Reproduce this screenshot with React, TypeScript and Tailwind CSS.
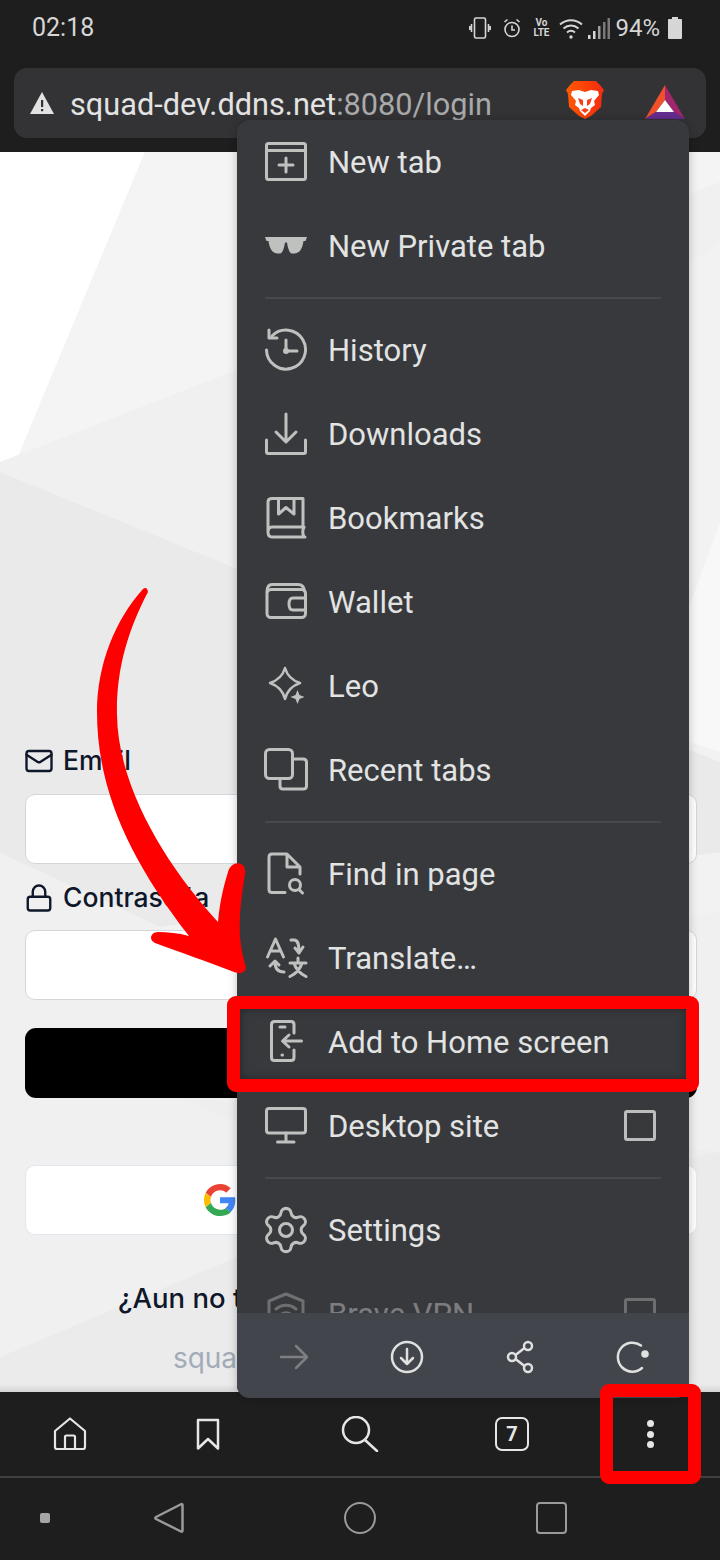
import { Lock, Mail, Settings } from "lucide-react";
import type { ReactNode } from "react";

const roboto = "font-['Roboto',sans-serif]";
const inter = "font-['Inter',sans-serif]";

// menu icons share a 44px box, coordinates read off the screenshot
function Icon({ children }: { children: ReactNode }) {
  return (
    <svg
      width="44"
      height="44"
      viewBox="0 0 44 44"
      fill="none"
      stroke="currentColor"
      strokeWidth="3"
      strokeLinecap="round"
      strokeLinejoin="round"
      className="shrink-0 text-[#bfc1bf]"
    >
      {children}
    </svg>
  );
}

function Checkbox() {
  return <div className="ml-auto mr-[33px] h-[31px] w-[32px] -translate-y-[1px] rounded-[3px] border-[3px] border-[#bcbebd]" />;
}

function MenuRow({ icon, label, check, faded }: { icon: ReactNode; label: string; check?: boolean; faded?: boolean }) {
  return (
    <div className={`flex h-[84px] shrink-0 items-center pl-[27px] ${faded ? "opacity-40" : ""}`}>
      {icon}
      <span className={`ml-[20px] pt-[2px] text-[31px] text-[#e2e3e3] ${roboto}`}>{label}</span>
      {check && <Checkbox />}
    </div>
  );
}

function MenuDivider() {
  return (
    <div className="flex h-[20px] shrink-0 items-center pb-[1px] pl-[28px] pr-[28px]">
      <div className="h-[2px] w-full bg-[#48494b]" />
    </div>
  );
}

function FormLabel({ icon, children }: { icon: ReactNode; children: ReactNode }) {
  return (
    <div className={`flex h-[34px] items-center text-[26.5px] font-medium text-[#0f172a] ${inter}`}>
      <span className="-ml-[1px] mr-[9px] flex w-[30px] justify-center">{icon}</span>
      {children}
    </div>
  );
}

function Background() {
  return (
    <svg className="absolute inset-0" width="720" height="1240" viewBox="0 0 720 1240">
      <rect width="720" height="1240" fill="#f2f2f2" />
      <polygon points="0,0 145,0 0,348" fill="#ffffff" />
      <polygon points="145,0 720,0 720,60 0,310 0,348" fill="#f4f4f4" />
      <polygon points="0,310 720,30 720,90 240,418 0,320" fill="#f0f0f0" />
      <polygon points="0,320 240,418 720,610 720,700 160,775 0,701" fill="#eaeaea" />
      <polygon points="0,701 160,775 240,810 720,760 720,1000 237,1105 0,1205" fill="#f0f0f0" />
      <polygon points="180,945 720,1000 720,1010 233,968" fill="#eeeeee" />
      <polygon points="0,1205 237,1105 720,1000 720,1240 0,1240" fill="#ebebeb" />
      <polygon points="689,455 720,370 720,600 689,590" fill="#f8f8f8" />
    </svg>
  );
}

function Page() {
  return (
    <div className="relative flex h-[1240px] flex-col overflow-hidden pl-[25px] pr-[23px] pt-[592px]">
      <Background />
      <div className="relative flex flex-col">
        <FormLabel icon={<Mail size={30} strokeWidth={1.9} />}>Email</FormLabel>
        <div className="mt-[16px] h-[70px] rounded-[10px] border border-[#d4d6dc] bg-white" />
        <div className="mt-[17px]">
          <FormLabel icon={<Lock size={30} strokeWidth={1.9} />}>Contraseña</FormLabel>
        </div>
        <div className="mt-[15px] h-[70px] rounded-[10px] border border-[#d4d6dc] bg-white" />
        <div className={`mt-[28px] flex h-[70px] items-center justify-center rounded-[11px] bg-black text-[26px] text-white ${inter}`}>
          Iniciar sesión
        </div>
        <div className={`mt-[67px] flex h-[70px] items-center justify-center gap-[14px] rounded-[10px] border border-[#e2e8f0] bg-white text-[26px] text-[#0f172a] ${inter}`}>
          <svg width="32" height="32" viewBox="0 0 48 48">
            <path fill="#EA4335" d="M24 9.5c3.54 0 6.71 1.22 9.21 3.6l6.85-6.85C35.9 2.38 30.47 0 24 0 14.62 0 6.51 5.38 2.56 13.22l7.98 6.19C12.43 13.72 17.74 9.5 24 9.5z" />
            <path fill="#4285F4" d="M46.98 24.55c0-1.57-.15-3.09-.38-4.55H24v9.02h12.94c-.58 2.96-2.26 5.48-4.78 7.18l7.73 6c4.51-4.18 7.09-10.36 7.09-17.65z" />
            <path fill="#FBBC05" d="M10.53 28.59c-.48-1.45-.76-2.99-.76-4.59s.27-3.14.76-4.59l-7.98-6.19C.92 16.46 0 20.12 0 24c0 3.88.92 7.54 2.56 10.78l7.97-6.19z" />
            <path fill="#34A853" d="M24 48c6.48 0 11.93-2.13 16.09-5.81l-7.73-6c-2.15 1.45-4.92 2.3-8.37 2.3-6.26 0-11.57-4.22-13.47-9.91l-7.98 6.19C6.51 42.62 14.62 48 24 48z" />
          </svg>
          Continuar con Google
        </div>
        <div className={`mt-[46px] h-[34px] whitespace-nowrap text-center text-[27.5px] font-medium leading-[34px] text-[#0f172a] ${inter}`}>
          ¿Aun no tienes cuenta? Regístrate ya
        </div>
        <div className={`mt-[26px] h-[34px] whitespace-nowrap text-center text-[28px] leading-[34px] text-[#a3abb8] ${inter}`}>
          squad-dev.ddns.net © 2024
        </div>
      </div>
      <div className="absolute inset-x-0 bottom-0 h-[8px] bg-gradient-to-b from-transparent to-black/10" />
    </div>
  );
}

function StatusBar() {
  return (
    <div className="flex h-[68px] items-center pl-[32px] pr-[38px] text-[#d6d6d6]">
      <span className={`mb-[12px] text-[25px] ${roboto}`}>02:18</span>
      <div className="mb-[12px] ml-auto flex items-center">
        <svg width="22" height="22" viewBox="0 0 22 22" fill="none" stroke="currentColor" strokeWidth="1.6">
          <rect x="5.5" y="1" width="11" height="20" rx="1.5" />
          <path d="M2.5 7v8M19.5 7v8M.8 9v4M21.2 9v4" />
        </svg>
        <svg className="ml-[12px]" width="18" height="20" viewBox="0 0 18 20" fill="none" stroke="currentColor" strokeWidth="1.6">
          <circle cx="9" cy="11.5" r="7" />
          <path d="M9 7.5v4.5h3M1.5 4L4.5 1.5M16.5 4L13.5 1.5" />
        </svg>
        <div className={`ml-[12px] flex w-[16px] flex-col items-center text-[10px] font-bold leading-[10px] ${roboto}`}>
          <span>Vo</span>
          <span>LTE</span>
        </div>
        <svg className="ml-[10px]" width="24" height="21" viewBox="0 0 24 21" fill="none" stroke="currentColor" strokeWidth="2">
          <path d="M1 6.5C7.5 .8 16.5 .8 23 6.5M4.5 10.5C9 6.5 15 6.5 19.5 10.5M8 14.5c2.4-2 5.6-2 8 0" />
          <circle cx="12" cy="19" r="1.7" fill="currentColor" stroke="none" />
        </svg>
        <svg className="ml-[5px]" width="22" height="21" viewBox="0 0 22 21" fill="currentColor">
          <rect x="0" y="17" width="2.5" height="4" />
          <rect x="5" y="13" width="2.5" height="8" />
          <rect x="10" y="8" width="2.5" height="13" opacity="0.7" />
          <rect x="15" y="4" width="2.5" height="17" opacity="0.5" />
          <rect x="19.5" y="0" width="2.5" height="21" opacity="0.5" />
        </svg>
        <span className={`ml-[5px] text-[24px] ${roboto}`}>94%</span>
        <svg className="ml-[8px]" width="14" height="22" viewBox="0 0 14 22" fill="currentColor">
          <path d="M4 0h6v2h3a1 1 0 0 1 1 1v18a1 1 0 0 1-1 1H1a1 1 0 0 1-1-1V3a1 1 0 0 1 1-1h3z" />
        </svg>
      </div>
    </div>
  );
}

function UrlBar() {
  return (
    <div className="px-[14px] pb-[14px]">
      <div className="flex h-[70px] items-center rounded-[13px] bg-[#333336] pl-[16px]">
        <svg width="24" height="22" viewBox="0 0 24 22">
          <path d="M12 0L24 22H0z" fill="#e2e2e2" />
          <rect x="11" y="8" width="2.2" height="7" fill="#333336" />
          <rect x="11" y="17" width="2.2" height="2.2" fill="#333336" />
        </svg>
        <span className={`ml-[16px] pt-[4px] text-[30.7px] text-[#e3e3e3] ${roboto}`}>
          squad-dev.ddns.net<span className="text-[#a9aaab]">:8080/login</span>
        </span>
        <svg className="-mt-[6px] ml-auto" width="38" height="38" viewBox="0 0 38 38">
          <defs>
            <linearGradient id="braveFill" x1="0" y1="0" x2="1" y2="0">
              <stop offset="0" stopColor="#ff5a00" />
              <stop offset="1" stopColor="#f52a10" />
            </linearGradient>
          </defs>
          <path d="M8 0H30L34 4L38 9L36 13L35 26L25 35L19 38L13 35L3 26L2 13L0 9L4 4Z" fill="url(#braveFill)" />
          <path d="M6 10L13 9L19 11L25 9L32 10L33 14L28 20L29 24L25 27L24 30L19 35L14 30L13 27L9 24L10 20L5 14Z" fill="#ffffff" />
          <path d="M12 17L17 19V25L14 23ZM26 17L21 19V25L24 23ZM15 29L19 27L23 29L19 32Z" fill="#f6421a" />
        </svg>
        <svg className="ml-[41px] mr-[21px] -mt-[2px]" width="40" height="34" viewBox="0 0 40 34">
          <path d="M20 0L20 15L11 27L0 34Z" fill="#f0502c" />
          <path d="M20 0L40 34L29 27L20 15Z" fill="#a0266e" />
          <path d="M0 34H40L29 27H11Z" fill="#662d91" />
          <path d="M20 15L29 27H11Z" fill="#ffffff" />
        </svg>
      </div>
    </div>
  );
}

function Menu() {
  return (
    <div className="absolute left-[237px] top-[120px] flex h-[1278px] w-[452px] flex-col overflow-hidden rounded-[13px] bg-[#38393d] shadow-[0_0_10px_rgba(0,0,0,0.25)]">
      <div className="flex h-[1193px] flex-col overflow-hidden">
        <MenuRow label="New tab" icon={<Icon><rect x="2.5" y="3.5" width="39" height="36" rx="2" /><path d="M2.5 10.5H41.5M22 18V32M15 25H29" /></Icon>} />
        <MenuRow label="New Private tab" icon={<Icon><path d="M1 13H43L41.5 17H39.5C38.5 24 36 29.5 30 29.5H28C25 29.5 23.5 22 23 18.5H21C20.5 22 19 29.5 16 29.5H14C8 29.5 5.5 24 4.5 17H2.5Z" fill="currentColor" stroke="none" /></Icon>} />
        <MenuDivider />
        <MenuRow label="History" icon={<Icon><path d="M8 8A19.5 19.5 0 1 1 2.5 22" /><path d="M5 2V10H13" /><path d="M22 12V23H33" /><circle cx="22" cy="23" r="1.5" fill="currentColor" /></Icon>} />
        <MenuRow label="Downloads" icon={<Icon><path d="M22 2V30M12 20L22 30L32 20" /><path d="M2.5 28V40C2.5 41 3 41.5 4 41.5H40C41 41.5 41.5 41 41.5 40V28" /></Icon>} />
        <MenuRow label="Bookmarks" icon={<Icon><path d="M39 31V2.5H8C5 2.5 4 4 4 6V36C4 39.5 5.5 41 8 41H41M39 31H8C5 31 4 33.5 4 36M40 31C38.5 34 38.5 38 40 41" /><path d="M14.5 3V18L22 11.5L30 18V3" /></Icon>} />
        <MenuRow label="Wallet" icon={<Icon><path d="M3 12C3 7 5 4.5 8 4.5H34C38 4.5 40 6.5 40.5 11" /><rect x="3" y="9.5" width="38.5" height="28" rx="4" /><path d="M41 18H29C26 18 25 20 25 24C25 28 26 30 29 30H41" /></Icon>} />
        <MenuRow label="Leo" icon={<Icon><path d="M21 4C23 11 27 16 36 19C27 22 23 27 21 35C19 27 15 22 6 19C15 16 19 11 21 4Z" strokeWidth="2.5" /><path d="M33.5 26L35.5 31L40.5 33L35.5 35L33.5 40L31.5 35L26.5 33L31.5 31Z" fill="currentColor" stroke="none" /></Icon>} />
        <MenuRow label="Recent tabs" icon={<Icon><rect x="1.5" y="1.5" width="27" height="29" rx="4" /><path d="M29 11H39C41.5 11 42.5 12 42.5 14V38C42.5 40 41.5 41 39 41H19C17 41 16 40 16 38V31" /></Icon>} />
        <MenuDivider />
        <MenuRow label="Find in page" icon={<Icon><path d="M21 40.5H8C6 40.5 5 39.5 5 37.5V5C5 3 6 2 8 2H23L36 15V22M23 2V15H36" /><circle cx="31" cy="33" r="5.5" /><path d="M35 37.5L38.5 41" /></Icon>} />
        <MenuRow label="Translate…" icon={<Icon><path d="M3.5 21L11.5 3L19.5 21M6.5 15H16.5" /><path d="M26 27H42M34 22V27M38 27C36 34 31 38 26 40.5M30 27C32 34 37 38 42 40.5" /><path d="M27 4H30C34 4 35 8 35 16M31 12L35 17L39 11" /><path d="M11 26C11 33 14 36 20 36M6 30L11 25L15 29" /></Icon>} />
        <MenuRow label="Add to Home screen" icon={<Icon><path d="M30 13V4.5C30 2.5 29 1.5 27 1.5H10.5C8.5 1.5 7.5 2.5 7.5 4.5V37.5C7.5 39.5 8.5 40.5 10.5 40.5H27C29 40.5 30 39.5 30 37.5V30" /><path d="M16 7H21M18 35H18.5" /><path d="M37.5 21H19M25 15L18.5 21L25 27" /></Icon>} />
        <MenuRow label="Desktop site" check icon={<Icon><rect x="2.5" y="4.5" width="39" height="24.5" rx="2.5" /><path d="M22 29V37M13.5 38H30" /></Icon>} />
        <MenuDivider />
        <MenuRow label="Settings" icon={<Settings size={52} strokeWidth={1.4} className="-mx-[4px] shrink-0 text-[#bfc1bf]" />} />
        <MenuRow label="Brave VPN" check faded icon={<Icon><path d="M22 2L39 9V26C39 34 30 39 22 42C14 39 5 34 5 26V9Z" /><path d="M12 17C18 12 26 12 32 17M16 23C20 20 24 20 28 23" /></Icon>} />
      </div>
      <div className="grid h-[85px] shrink-0 grid-cols-4 items-center justify-items-center bg-[#43454c] pt-[2px]">
        <svg width="30" height="26" viewBox="0 0 30 26" fill="none" stroke="#7d7f83" strokeWidth="2.5" strokeLinecap="round" strokeLinejoin="round">
          <path d="M2 13H28M17 2L28 13L17 24" />
        </svg>
        <svg width="34" height="34" viewBox="0 0 34 34" fill="none" stroke="#dfe0e0" strokeWidth="2.5" strokeLinecap="round" strokeLinejoin="round">
          <circle cx="17" cy="17" r="15" />
          <path d="M17 9V24M11 18L17 24L23 18" />
        </svg>
        <svg width="30" height="34" viewBox="0 0 30 34" fill="none" stroke="#dfe0e0" strokeWidth="2.5">
          <circle cx="23" cy="6" r="4" />
          <circle cx="7" cy="17" r="4" />
          <circle cx="23" cy="28" r="4" />
          <path d="M10.5 15L19.5 8M10.5 19L19.5 26" />
        </svg>
        <svg width="34" height="34" viewBox="0 0 34 34" fill="none" stroke="#dfe0e0" strokeWidth="2.5" strokeLinecap="round">
          <path d="M25 5.5A14.5 14.5 0 1 0 26 28" />
          <circle cx="29" cy="14" r="3.8" fill="#dfe0e0" stroke="none" />
        </svg>
      </div>
    </div>
  );
}

function Toolbar() {
  return (
    <div className="grid h-[84px] grid-cols-[140px_136px_168px_136px_140px] items-center justify-items-center text-[#e6e6e6]">
      <svg width="34" height="34" viewBox="0 0 34 34" fill="none" stroke="currentColor" strokeWidth="2.2" strokeLinejoin="round">
        <path d="M2 14L17 1.5L32 14V30C32 31.5 31.5 32 30 32H4C2.5 32 2 31.5 2 30Z" />
        <path d="M12 32V20C12 19 12.5 18.5 13.5 18.5H20.5C21.5 18.5 22 19 22 20V32" />
      </svg>
      <svg width="24" height="32" viewBox="0 0 24 32" fill="none" stroke="currentColor" strokeWidth="2.5" strokeLinejoin="round">
        <path d="M2 2H22V30.5L12 21L2 30.5Z" />
      </svg>
      <svg width="38" height="36" viewBox="0 0 38 36" fill="none" stroke="currentColor" strokeWidth="2.5" strokeLinecap="round">
        <circle cx="15" cy="14" r="13" />
        <path d="M24 24L36 35" />
      </svg>
      <div className={`flex h-[34px] w-[34px] items-center justify-center rounded-[7px] border-[2.5px] border-[#e6e6e6] text-[20px] font-bold ${roboto}`}>7</div>
      <div className="flex flex-col items-center gap-[3.5px]">
        <div className="h-[7px] w-[7px] rounded-full bg-[#e6e6e6]" />
        <div className="h-[7px] w-[7px] rounded-full bg-[#e6e6e6]" />
        <div className="h-[7px] w-[7px] rounded-full bg-[#e6e6e6]" />
      </div>
    </div>
  );
}

function NavBar() {
  return (
    <div className="grid h-[82px] grid-cols-[90px_158px_224px_158px_90px] items-center justify-items-center pb-[3px] text-[#9a9a9a]">
      <div className="h-[10px] w-[10px] rounded-[2px] bg-[#a5a5a5]" />
      <svg width="30" height="32" viewBox="0 0 30 32" fill="none" stroke="currentColor" strokeWidth="2.5" strokeLinejoin="round">
        <path d="M27.5 2C28.5 2 28.5 3 28.5 3.5V28.5C28.5 29.5 28 30 27 29.5L2 17C1 16.5 1 15.5 2 15Z" />
      </svg>
      <div className="h-[32px] w-[32px] rounded-full border-[2.5px] border-[#9a9a9a]" />
      <div className="h-[32px] w-[31px] rounded-[4px] border-[2.5px] border-[#9a9a9a]" />
    </div>
  );
}

function Annotations() {
  return (
    <>
      <div className="absolute left-[227px] top-[996px] h-[96px] w-[472px] rounded-[9px] border-[13px] border-[#ff0000] shadow-[inset_0_0_8px_rgba(0,0,0,0.35)]" />
      <div className="absolute left-[600px] top-[1384px] h-[100px] w-[101px] rounded-[9px] border-[13px] border-[#ff0000]" />
      <svg className="absolute left-[90px] top-[580px]" width="165" height="400" viewBox="90 580 165 400">
        <path
          d="M143 589Q147 586 148 592C128 630 116 670 117 715C118 790 170 870 218 922C220 900 224 885 228 872C231 860 247 860 245 874C240 905 236 935 245 964C248 972 241 975 234 972C208 962 180 952 155 943C148 940 151 932 158 932C168 932 178 933 189 936C130 860 97 790 97 712C97 665 115 620 143 589Z"
          fill="#ff0000"
        />
      </svg>
    </>
  );
}

export default function App() {
  return (
    <div className="relative flex h-[1560px] w-[720px] flex-col overflow-hidden bg-[#1e1e1e]">
      <StatusBar />
      <UrlBar />
      <Page />
      <Toolbar />
      <div className="h-[2px] bg-[#3d423f]" />
      <NavBar />
      <Menu />
      <Annotations />
    </div>
  );
}
